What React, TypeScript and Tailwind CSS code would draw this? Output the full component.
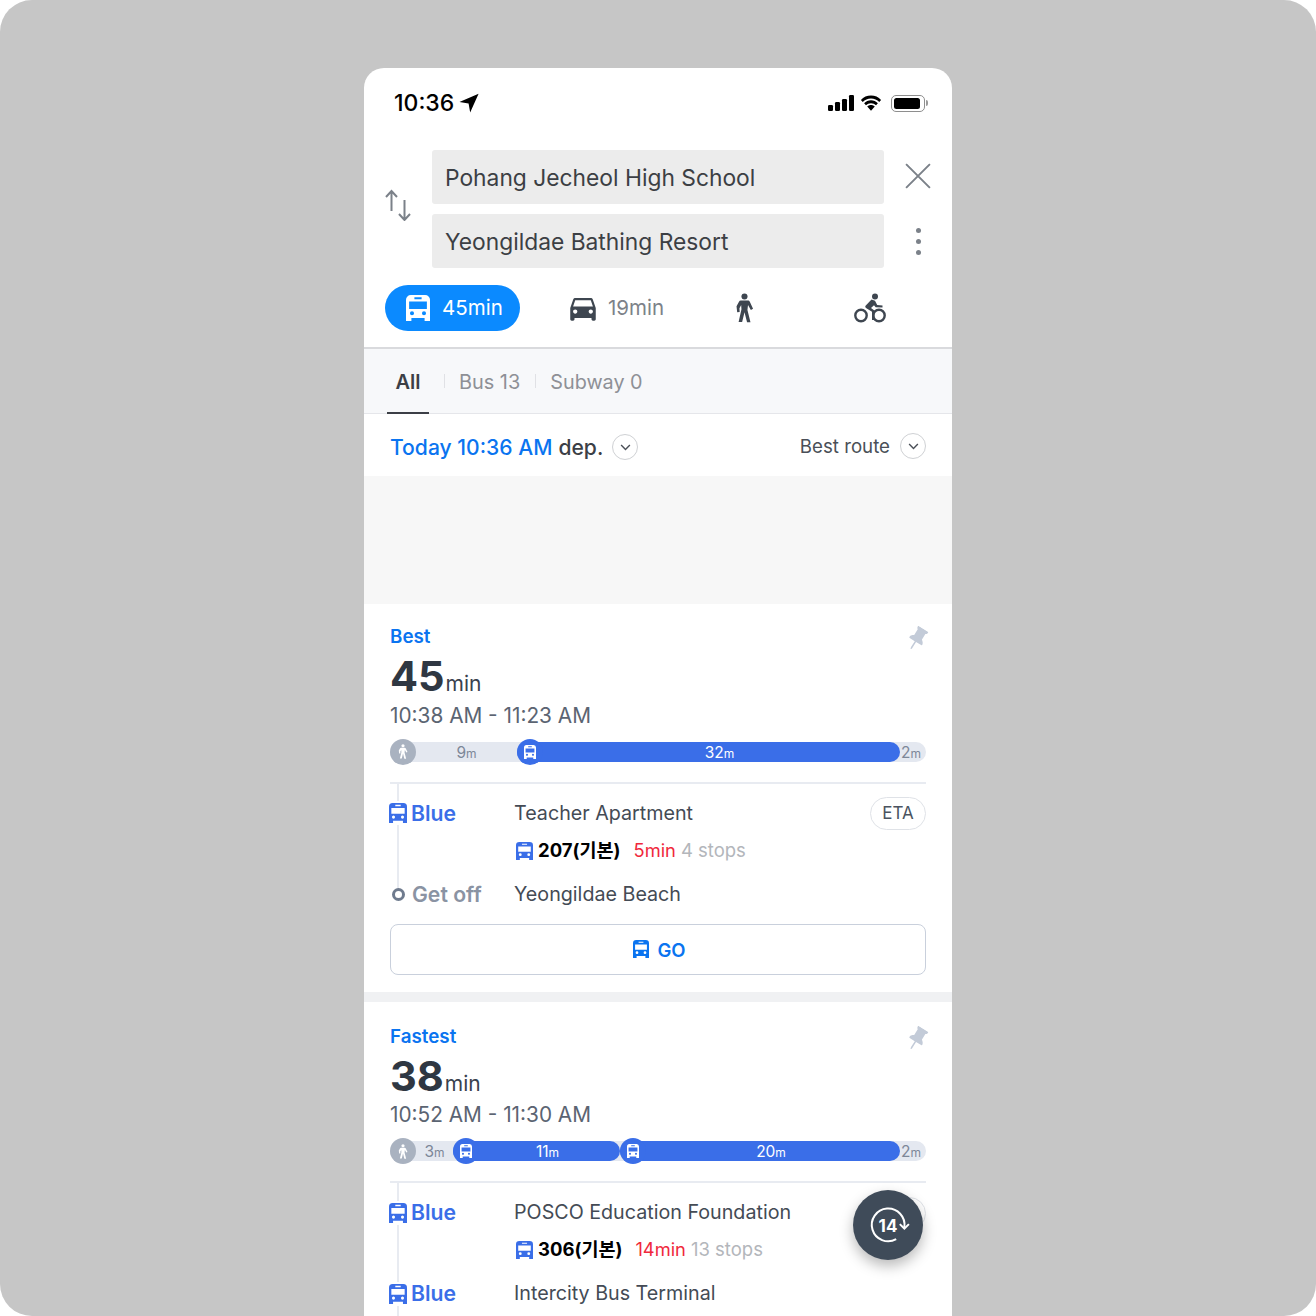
import { BsPinFill } from "react-icons/bs";
import { MdDirectionsCar } from "react-icons/md";

const FONT = "[font-family:Inter,'Noto_Sans_CJK_KR',sans-serif]";

function BusIcon({ className }: { className?: string }) {
  return (
    <svg viewBox="2 1 20 22" preserveAspectRatio="none" className={className} fill="currentColor">
      <path
        fillRule="evenodd"
        d="M6 1h12a4 4 0 0 1 4 4v18h-4.500v-2.500h-11V23H2V5a4 4 0 0 1 4-4zM9 3v1.500h6V3H9zM4.600 6.400v6.400h14.800V6.400H4.600zM7 14.800a1.700 1.700 0 1 0 0 3.400 1.700 1.700 0 0 0 0-3.400zm10 0a1.700 1.700 0 1 0 0 3.400 1.700 1.700 0 0 0 0-3.400z"
      />
    </svg>
  );
}

function WalkIcon({ className }: { className?: string }) {
  return (
    <svg viewBox="2 0 20 32" preserveAspectRatio="none" className={className} fill="currentColor">
      <circle cx="12" cy="3.600" r="3.200" />
      <path d="M8 8h7.500c1 0 1.700.5 2.100 1.400l3.400 7.400-2.300 1.200-3-5.200-.6 5.200 3.200 13.200h-3.600L12 20.500 9.500 31H5.800l3-13.600-.3-4.600-1.800 3.400.2 4-2.600.2L3.600 14l2.600-4.800C6.600 8.400 7.200 8 8 8z" />
    </svg>
  );
}

function BikeIcon({ className }: { className?: string }) {
  return (
    <svg viewBox="0 0 32 30" className={className}>
      <circle cx="7" cy="22.500" r="5.700" fill="none" stroke="currentColor" strokeWidth="2.400" />
      <circle cx="25" cy="22.500" r="5.700" fill="none" stroke="currentColor" strokeWidth="2.400" />
      <circle cx="21" cy="3.400" r="3" fill="currentColor" />
      <path
        fill="currentColor"
        d="M17.500 6.500l3.500 1.200 2.200 4.300 5.300.4v2.200l-6.800-.4-1.700-2-3 2.800 3.400 2.600V27h-2.400v-8.300l-6-3.800c-1-.7-.9-1.700-.2-2.400z"
      />
    </svg>
  );
}

function Chevron() {
  return (
    <span className="flex h-[26px] w-[26px] items-center justify-center rounded-full border border-[#cfd1d4] bg-white">
      <svg viewBox="0 0 12 8" className="h-[7px] w-[11px]" fill="none" stroke="#4a4f57" strokeWidth="1.600">
        <path d="M1 1.200l5 5 5-5" />
      </svg>
    </span>
  );
}

function Mins({ v, unit = "text-[#7d8798]" }: { v: string; unit?: string }) {
  return (
    <span className="text-[15.500px] leading-none">
      {v}
      <span className={`text-[12px] ${unit}`}>m</span>
    </span>
  );
}

function Dot({ walk }: { walk?: boolean }) {
  return (
    <span
      className={`-my-[3px] flex h-[26px] w-[26px] shrink-0 items-center justify-center rounded-full ${
        walk ? "bg-[#a9b2c0]" : "bg-[#3a6ee8]"
      }`}
    >
      {walk ? <WalkIcon className="h-[15px] w-[10px] text-white" /> : <BusIcon className="h-[14px] w-[12px] text-white" />}
    </span>
  );
}

function Timeline({ first, rides }: { first: [string, string]; rides: [string, string][] }) {
  return (
    <div className="mt-[12px] flex h-5 items-center rounded-full bg-[#e4e8f0]">
      <div className={`flex items-center text-[#7d8798] ${first[1]}`}>
        <Dot walk />
        <span className="flex-1 text-center">
          <Mins v={first[0]} />
        </span>
      </div>
      {rides.map(([v, w]) => (
        <div key={v} className={`flex h-5 items-center rounded-full bg-[#3a6ee8] text-white ${w}`}>
          <Dot />
          <span className="flex-1 pr-[4px] text-center">
            <Mins v={v} unit="text-white" />
          </span>
        </div>
      ))}
      <span className="flex-1 pr-[4px] text-center text-[#7d8798]">
        <Mins v="2" />
      </span>
    </div>
  );
}

function RowLabel({ children, dim }: { children: string; dim?: boolean }) {
  return (
    <div className={`flex w-[124px] shrink-0 items-center text-[21.200px] font-semibold ${dim ? "text-[#8a93a3]" : "text-[#3a6ee8]"}`}>
      {dim ? (
        <span className="ml-[2px] mr-[7px] h-[13px] w-[13px] rounded-full border-[3px] border-[#6f7b8e] bg-white" />
      ) : (
        <span className="-ml-[1px] mr-[4px] bg-white py-[2px]">
          <BusIcon className="h-[20px] w-[18px]" />
        </span>
      )}
      {children}
    </div>
  );
}

type Route = {
  tag: string;
  mins: string;
  span: string;
  first: [string, string];
  rides: [string, string][];
  from: string;
  line: string;
  wait: string;
  stops: string;
  to: string;
  lastLabel: string;
  dim?: boolean;
};

function RouteCard({ r, go }: { r: Route; go?: boolean }) {
  return (
    <section className={`relative bg-white px-[26px] pb-[17px] ${go ? "pt-[21px]" : "pt-[23px]"}`}>
      <div className="flex items-center justify-between">
        <span className="text-[18.800px] leading-[22px] font-semibold text-[#0a74f0]">{r.tag}</span>
        <BsPinFill className="mt-[2px] -mb-[2px] mr-[-3px] h-[24px] w-[24px] rotate-[32deg] text-[#c3cbd8]" />
      </div>
      <div className="mt-[4px] flex items-baseline text-[#2f3742]">
        <span className="text-[41.500px] leading-[46px] font-bold">{r.mins}</span>
        <span className="ml-[1px] text-[21px] text-[#39414d]">min</span>
      </div>
      <div className="mt-[2px] text-[20.800px] leading-[28px] text-[#5b6472]">{r.span}</div>
      <Timeline first={r.first} rides={r.rides} />
      <div className="relative mt-[20px] border-t-2 border-[#e8ebf1] pt-[14px]">
        <span className={`absolute top-0 left-[7px] w-[2px] bg-[#e8ebf1] ${go ? "bottom-[22px]" : "-bottom-[20px]"}`} />
        <div className="relative flex h-[32px] items-center">
          <RowLabel>Blue</RowLabel>
          <span className="text-[19.700px] text-[#444b55]">{r.from}</span>
          <span className="ml-auto flex h-[33px] w-[56px] items-center justify-center rounded-full border border-[#dfe2e7] bg-white text-[17px] text-[#4a5360]">
            ETA
          </span>
        </div>
        <div className="relative mt-[7px] ml-[126px] flex h-[28px] items-center">
          <BusIcon className="mr-[5px] h-[18px] w-[17px] text-[#3a6ee8]" />
          <span className="text-[18.500px] font-bold text-black">{r.line}</span>
          <span className="ml-[13px] text-[18.300px] text-[#f0283c]">{r.wait}</span>
          <span className="ml-[5px] text-[18.500px] text-[#b3b6bb]">{r.stops}</span>
        </div>
        <div className="relative mt-[14px] flex h-[32px] items-center">
          <RowLabel dim={r.dim}>{r.lastLabel}</RowLabel>
          <span className="text-[19.700px] text-[#444b55]">{r.to}</span>
        </div>
      </div>
      {go && (
        <button
          type="button"
          className="mt-[13px] flex h-[51px] w-full items-center justify-center gap-[8px] rounded-[8px] border border-[#c9d0dc] pl-[3px] text-[18.500px] font-semibold text-[#0a74f0]"
        >
          <BusIcon className="h-[18px] w-[16px]" />
          <span className="pt-[3px]">GO</span>
        </button>
      )}
    </section>
  );
}

const ROUTES: Route[] = [
  {
    tag: "Best",
    mins: "45",
    span: "10:38 AM - 11:23 AM",
    first: ["9", "w-[127px]"],
    rides: [["32", "w-[383px]"]],
    from: "Teacher Apartment",
    line: "207(기본)",
    wait: "5min",
    stops: "4 stops",
    to: "Yeongildae Beach",
    lastLabel: "Get off",
    dim: true,
  },
  {
    tag: "Fastest",
    mins: "38",
    span: "10:52 AM - 11:30 AM",
    first: ["3", "w-[63px]"],
    rides: [
      ["11", "w-[167px]"],
      ["20", "w-[280px]"],
    ],
    from: "POSCO Education Foundation",
    line: "306(기본)",
    wait: "14min",
    stops: "13 stops",
    to: "Intercity Bus Terminal",
    lastLabel: "Blue",
  },
];

export default function App() {
  return (
    <div className={`${FONT} flex h-[1316px] w-[1316px] justify-center overflow-hidden rounded-[32px] bg-[#c6c6c6] pt-[68px]`}>
      <div className="relative h-[1248px] w-[588px] overflow-hidden rounded-t-[20px] bg-white">
        {/* status bar */}
        <div className="flex h-[70px] items-center justify-between pr-[24px] pl-[30px]">
          <div className="flex items-center gap-[5px] text-[23px] font-medium text-black">
            10:36
            <svg viewBox="0 0 24 24" className="h-[20px] w-[20px]" fill="#000">
              <path d="M23.500 1L.5 10.800l11 1.700 1.900 11z" />
            </svg>
          </div>
          <div className="flex items-center gap-[6px]">
            <svg viewBox="0 0 26 16" className="h-[16px] w-[26px]" fill="#000">
              <rect x="0" y="10" width="5" height="6" rx="1.200" />
              <rect x="7" y="7" width="5" height="9" rx="1.200" />
              <rect x="14" y="4" width="5" height="12" rx="1.200" />
              <rect x="21" y="0" width="5" height="16" rx="1.200" />
            </svg>
            <svg viewBox="0 0 24 18" className="h-[17px] w-[22px]" fill="#000">
              <path d="M12 3.600c3.500 0 6.700 1.400 9 3.700l2-2.200C20.100 2.100 16.300.4 12 .4S3.900 2.100 1 5.100l2 2.200c2.300-2.300 5.500-3.700 9-3.700z" />
              <path d="M12 8.600c2.100 0 4 .8 5.500 2.200l2-2.200C17.500 6.700 14.900 5.500 12 5.500s-5.500 1.200-7.500 3.100l2 2.200c1.500-1.400 3.400-2.200 5.500-2.200z" />
              <path d="M12 10.700c-1.600 0-3 .6-4.100 1.600L12 17l4.100-4.700c-1.100-1-2.500-1.600-4.100-1.600z" />
            </svg>
            <span className="ml-[3px] flex items-center">
              <span className="flex h-[17px] w-[34px] items-center rounded-[5px] border border-[#8e8e8e] p-[2px]">
                <span className="h-full w-[26px] rounded-[2.500px] bg-black" />
              </span>
              <span className="ml-[1px] h-[6px] w-[2px] rounded-r-full bg-[#9a9a9a]" />
            </span>
          </div>
        </div>

        {/* search */}
        <div className="mt-[12px] flex items-center pl-[21px]">
          <svg viewBox="0 0 26 32" className="mb-[9px] h-[32px] w-[26px]" fill="none" stroke="#7b8189" strokeWidth="2">
            <path d="M6.500 22V2M1 8l5.500-6L12 8M19.500 11v20M14 25l5.500 6 5.500-6" />
          </svg>
          <div className="ml-[21px] flex w-[452px] flex-col gap-[10px]">
            <div className="flex h-[54px] items-center rounded-[3px] bg-[#ececec] px-[13px] pt-[2px] text-[22.800px] text-[#3c3f44]">Pohang Jecheol High School</div>
            <div className="flex h-[54px] items-center rounded-[3px] bg-[#ececec] px-[13px] pt-[2px] text-[22.800px] text-[#3c3f44]">Yeongildae Bathing Resort</div>
          </div>
          <div className="flex flex-1 flex-col items-center gap-[39px]">
            <svg viewBox="0 0 24 24" className="h-[26px] w-[26px]" fill="none" stroke="#7b8189" strokeWidth="1.800">
              <path d="M1 1l22 22M23 1L1 23" />
            </svg>
            <div className="flex flex-col gap-[6px]">
              <span className="h-[5px] w-[5px] rounded-full bg-[#7b8189]" />
              <span className="h-[5px] w-[5px] rounded-full bg-[#7b8189]" />
              <span className="h-[5px] w-[5px] rounded-full bg-[#7b8189]" />
            </div>
          </div>
        </div>

        {/* transport modes */}
        <div className="flex h-[81px] items-center border-b-2 border-[#d9dadd] pl-[21px]">
          <div className="flex h-[46px] w-[135px] items-center rounded-full bg-[#0b8aff] pl-[21px] text-[20.500px] text-white">
            <BusIcon className="mr-[13px] h-[26px] w-[24px]" />
            <span className="-ml-px pt-[2px]">45min</span>
          </div>
          <MdDirectionsCar className="ml-[46px] h-[34px] w-[34px] text-[#3e4650]" />
          <span className="ml-[8px] pt-[2px] text-[20.500px] text-[#7d8289]">19min</span>
          <WalkIcon className="ml-[71px] h-[30px] w-[19px] text-[#3e4650]" />
          <BikeIcon className="ml-[100px] h-[30px] w-[32px] text-[#3e4650]" />
        </div>

        {/* filters */}
        <div className="flex h-[65px] items-center border-b border-[#e5e6ea] bg-[#f7f8fa] pl-[23px]">
          <div className="relative flex h-full w-[42px] items-center justify-center">
            <span className="pt-[2px] text-[20px] font-semibold text-[#3c3f46]">All</span>
            <span className="absolute right-0 -bottom-px left-0 h-[2px] bg-[#3c3f46]" />
          </div>
          <span className="ml-[15px] h-[14px] w-px bg-[#e0e1e5]" />
          <span className="ml-[14px] pt-[3px] text-[19.900px] text-[#8e9096]">Bus 13</span>
          <span className="ml-[15px] h-[14px] w-px bg-[#e0e1e5]" />
          <span className="ml-[14px] pt-[3px] text-[19.800px] text-[#8e9096]">Subway 0</span>
        </div>

        {/* departure */}
        <div className="flex h-[62px] items-center px-[26px] pt-[4px]">
          <span className="pt-[2px] text-[21.100px] font-medium text-[#0a74f0]">Today 10:36 AM</span>
          <span className="ml-[6px] pt-[2px] text-[21.100px] font-medium text-[#3c3f46]">dep.</span>
          <span className="ml-[9px]">
            <Chevron />
          </span>
          <span className="ml-auto text-[18.700px] text-[#4a4f57]">Best route</span>
          <span className="mb-[2px] ml-[10px]">
            <Chevron />
          </span>
        </div>

        <div className="h-[128px] bg-[#f7f7f7]" />

        <RouteCard r={ROUTES[0]} go />
        <div className="h-[10px] bg-[#f0f1f3]" />
        <RouteCard r={ROUTES[1]} />

        {/* refresh countdown button */}
        <button
          type="button"
          className="absolute top-[1122px] left-[489px] flex h-[70px] w-[70px] items-center justify-center rounded-full bg-[#3f4b59] shadow-[0_6px_14px_rgba(0,0,0,0.28)]"
        >
          <svg viewBox="0 0 44 44" className="absolute h-[40px] w-[40px] overflow-visible" fill="none" stroke="#fff" strokeWidth="2.200">
            <path d="M40 24.500A18 18 0 1 0 31 37.600" />
            <path d="M35 21l5 5 5-5" />
          </svg>
          <span className="relative pt-[4px] text-[17px] font-bold text-white">14</span>
        </button>
      </div>
    </div>
  );
}
